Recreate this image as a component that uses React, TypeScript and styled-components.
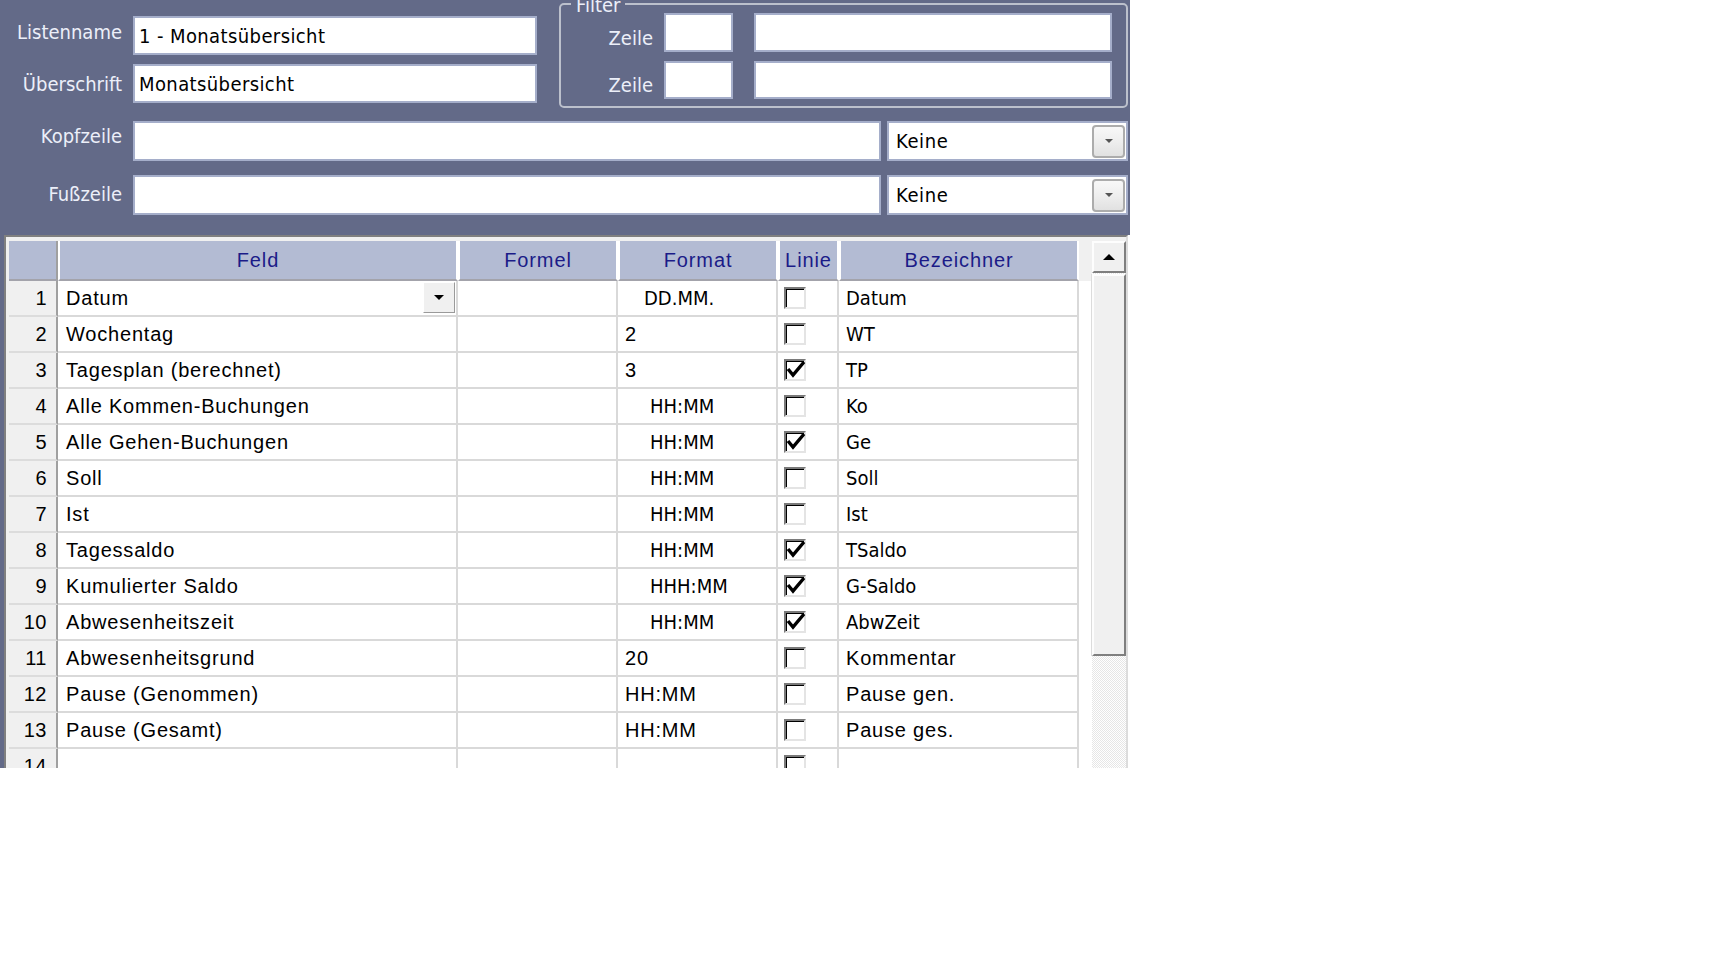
import styled, { createGlobalStyle } from "styled-components";

const msFont = `"DejaVu Sans Condensed", "DejaVu Sans", sans-serif`;
const arialFont = `"Liberation Sans", Arial, sans-serif`;
const slate = "#636a88";

const GlobalStyle = createGlobalStyle`
  html, body {
    margin: 0;
    padding: 0;
    background: #fff;
  }
  * {
    box-sizing: border-box;
  }
`;

const Panel = styled.div`
  width: 1130px;
  height: 768px;
  background: ${slate};
  display: flex;
  flex-direction: column;
  overflow: hidden;
`;

const UpperRow = styled.div`
  display: flex;
  align-items: flex-start;
`;

const NameFields = styled.div`
  display: grid;
  grid-template-columns: 133px 404px;
  grid-auto-rows: 39px;
  row-gap: 9px;
  padding-top: 16px;
`;

// labels sit a little off-centre in the original, so the top offset varies per row
const Label = styled.label<{ $bottom?: boolean; $top?: number }>`
  font-family: ${msFont};
  font-stretch: condensed;
  font-size: 20px;
  line-height: 24px;
  color: #eceff9;
  text-align: right;
  padding-right: 11px;
  white-space: nowrap;
  align-self: ${(p) => (p.$bottom ? "end" : "start")};
  padding-top: ${(p) => (p.$bottom ? 0 : p.$top ?? 4)}px;
  padding-bottom: ${(p) => (p.$bottom ? "2px" : "0")};
`;

const RowLabel = styled(Label)`
  padding-right: 5px;
`;

const TextInput = styled.input`
  width: 100%;
  height: 100%;
  margin: 0;
  border: 2px solid #a5aeca;
  background: #fff;
  padding: 0 4px;
  font-family: ${msFont};
  font-stretch: condensed;
  font-size: 20px;
  letter-spacing: 0.4px;
  color: #000;
  outline: none;
`;

const WideInput = styled(TextInput)`
  margin-left: 21px;
  width: calc(100% - 21px);
`;

const FilterBox = styled.div`
  position: relative;
  margin: 3px 0 0 22px;
  width: 569px;
  height: 105px;
  border: 2px solid #bcc0cc;
  border-radius: 5px;
  padding: 8px 14px 0 0;
  display: grid;
  grid-template-columns: 103px 69px 1fr;
  grid-template-rows: 39px 38px;
  row-gap: 9px;
`;

const Legend = styled.span`
  position: absolute;
  top: -10px;
  left: 10px;
  padding: 0 5px;
  background: ${slate};
  font-family: ${msFont};
  font-stretch: condensed;
  font-size: 20px;
  line-height: 20px;
  color: #eceff9;
`;

const LowerRows = styled.div`
  display: grid;
  grid-template-columns: 127px 748px 241px;
  column-gap: 6px;
  grid-auto-rows: 40px;
  row-gap: 14px;
  margin-top: 13px;
`;

const Combo = styled.div`
  display: flex;
  align-items: center;
  justify-content: space-between;
  border: 2px solid #a5aeca;
  background: #fff;
  padding: 0 1px 0 7px;
  font-family: ${msFont};
  font-stretch: condensed;
  font-size: 20px;
  letter-spacing: 0.6px;
  color: #000;
`;

const ComboButton = styled.span`
  width: 33px;
  height: 33px;
  border: 2px solid #acacac;
  border-radius: 4px;
  background: linear-gradient(#f8f8f8 0%, #eeeeee 50%, #e1e1e1 100%);
  display: flex;
  align-items: center;
  justify-content: center;

  &::after {
    content: "";
    border-left: 4px solid transparent;
    border-right: 4px solid transparent;
    border-top: 4px solid #555;
  }
`;

const GridFrame = styled.div`
  flex: 1;
  min-height: 0;
  margin: 20px 2px 0 4px;
  border-top: 2px solid #808080;
  border-left: 2px solid #808080;
  border-right: 2px solid #dcdcdc;
  box-shadow: 2px 0 0 #fff;
  background: #f0f0f0;
  padding: 4px 0 0 3px;
  display: flex;
  align-items: flex-start;
  overflow: hidden;
`;

const Table = styled.div`
  display: grid;
  grid-template-columns: 49px 400px 160px 160px 61px 240px 13px;
  grid-template-rows: 40px;
  grid-auto-rows: 36px;
  background: #fff;
`;

const HeadCell = styled.div`
  display: flex;
  align-items: center;
  justify-content: center;
  background: #b3bbd3;
  color: #1b1b88;
  font-family: ${arialFont};
  font-size: 20px;
  letter-spacing: 0.9px;
  border-left: 2px solid #fff;
  border-right: 2px solid #fff;
  border-bottom: 2px solid #a3a3ab;
`;

const CornerCell = styled(HeadCell)`
  border-left: 0;
  border-right-color: #a0a0a0;
`;

const HeadFiller = styled.div`
  background: #f0f0f0;
`;

const Cell = styled.div<{ $pad?: number; $ms?: boolean }>`
  display: flex;
  align-items: center;
  padding-left: ${(p) => p.$pad ?? 7}px;
  border-right: 2px solid #d9d9d9;
  border-bottom: 2px solid #d9d9d9;
  font-family: ${(p) => (p.$ms ? msFont : arialFont)};
  font-stretch: ${(p) => (p.$ms ? "condensed" : "normal")};
  letter-spacing: ${(p) => (p.$ms ? "0" : "0.8px")};
  font-size: 20px;
  color: #000;
  white-space: nowrap;
  overflow: hidden;
`;

const RowNum = styled(Cell)`
  justify-content: flex-end;
  padding: 0 9px 0 0;
  letter-spacing: 0.5px;
  background: #f0f0f0;
  border-right-color: #a0a0a0;
  border-bottom-color: #dcdcdc;
`;

const Filler = styled.div`
  background: #fff;
`;

const CellDrop = styled.span`
  margin: 0 1px 1px auto;
  width: 32px;
  height: 31px;
  flex: none;
  background: #f0f0f0;
  border: 1px solid;
  border-color: #fff #9a9a9a #9a9a9a #fff;
  display: flex;
  align-items: center;
  justify-content: center;

  &::after {
    content: "";
    border-left: 5px solid transparent;
    border-right: 5px solid transparent;
    border-top: 5px solid #000;
  }
`;

const CheckBox = styled.span`
  width: 22px;
  height: 22px;
  flex: none;
  border: 2px solid;
  border-color: #7a7a7a #e4e4e4 #e4e4e4 #7a7a7a;
  box-shadow: inset 1px 1px 0 #000;
  background: #fff;
  display: flex;
  align-items: center;
  justify-content: center;

  svg {
    overflow: visible;
  }
`;

const ScrollBar = styled.div`
  width: 34px;
  align-self: stretch;
  display: flex;
  flex-direction: column;
  background-color: #fff;
  background-image: repeating-conic-gradient(#e6e6e6 0 25%, #fff 0 50%);
  background-size: 2px 2px;
`;

const ScrollButton = styled.div`
  height: 32px;
  flex: none;
  background: #f0f0f0;
  border: 2px solid;
  border-color: #fdfdfd #7f7f7f #7f7f7f #fdfdfd;
  display: flex;
  align-items: center;
  justify-content: center;

  &::after {
    content: "";
    border-left: 6px solid transparent;
    border-right: 6px solid transparent;
    border-bottom: 6px solid #000;
  }
`;

const Thumb = styled.div`
  height: 382px;
  flex: none;
  margin-top: 1px;
  background: #f0f0f0;
  border: 2px solid;
  border-color: #fdfdfd #7f7f7f #7f7f7f #fdfdfd;
  box-shadow: -1px 0 0 #dcdcdc;
`;

type Row = {
  feld: string;
  format: string;
  fmtIndent?: number;
  fmtMs?: boolean;
  linie: boolean;
  bez: string;
  bezMs?: boolean;
};

const rows: Row[] = [
  { feld: "Datum", format: "DD.MM.", fmtIndent: 19, fmtMs: true, linie: false, bez: "Datum", bezMs: true },
  { feld: "Wochentag", format: "2", linie: false, bez: "WT", bezMs: true },
  { feld: "Tagesplan (berechnet)", format: "3", linie: true, bez: "TP", bezMs: true },
  { feld: "Alle Kommen-Buchungen", format: "HH:MM", fmtIndent: 25, fmtMs: true, linie: false, bez: "Ko", bezMs: true },
  { feld: "Alle Gehen-Buchungen", format: "HH:MM", fmtIndent: 25, fmtMs: true, linie: true, bez: "Ge", bezMs: true },
  { feld: "Soll", format: "HH:MM", fmtIndent: 25, fmtMs: true, linie: false, bez: "Soll", bezMs: true },
  { feld: "Ist", format: "HH:MM", fmtIndent: 25, fmtMs: true, linie: false, bez: "Ist", bezMs: true },
  { feld: "Tagessaldo", format: "HH:MM", fmtIndent: 25, fmtMs: true, linie: true, bez: "TSaldo", bezMs: true },
  { feld: "Kumulierter Saldo", format: "HHH:MM", fmtIndent: 25, fmtMs: true, linie: true, bez: "G-Saldo", bezMs: true },
  { feld: "Abwesenheitszeit", format: "HH:MM", fmtIndent: 25, fmtMs: true, linie: true, bez: "AbwZeit", bezMs: true },
  { feld: "Abwesenheitsgrund", format: "20", linie: false, bez: "Kommentar" },
  { feld: "Pause (Genommen)", format: "HH:MM", linie: false, bez: "Pause gen." },
  { feld: "Pause (Gesamt)", format: "HH:MM", linie: false, bez: "Pause ges." },
  { feld: "", format: "", linie: false, bez: "" },
];

const Check = ({ on }: { on: boolean }) => (
  <CheckBox>
    {on && (
      <svg width="18" height="18" viewBox="0 0 18 18">
        <polyline points="2,8 7,14 18,1" fill="none" stroke="#000" strokeWidth="3.4" />
      </svg>
    )}
  </CheckBox>
);

const App = () => {
  return (
    <>
      <GlobalStyle />
      <Panel>
        <UpperRow>
          <NameFields>
            <Label $top={4}>Listenname</Label>
            <TextInput defaultValue="1 - Monatsübersicht" />
            <Label $top={8}>Überschrift</Label>
            <TextInput defaultValue="Monatsübersicht" />
          </NameFields>
          <FilterBox>
            <Legend>Filter</Legend>
            <Label $bottom>Zeile</Label>
            <TextInput />
            <WideInput />
            <Label $bottom>Zeile</Label>
            <TextInput />
            <WideInput />
          </FilterBox>
        </UpperRow>
        <LowerRows>
          <RowLabel $top={3}>Kopfzeile</RowLabel>
          <TextInput />
          <Combo>
            Keine
            <ComboButton />
          </Combo>
          <RowLabel $top={7}>Fußzeile</RowLabel>
          <TextInput />
          <Combo>
            Keine
            <ComboButton />
          </Combo>
        </LowerRows>
        <GridFrame>
          <Table>
            <CornerCell />
            <HeadCell>Feld</HeadCell>
            <HeadCell>Formel</HeadCell>
            <HeadCell>Format</HeadCell>
            <HeadCell>Linie</HeadCell>
            <HeadCell>Bezeichner</HeadCell>
            <HeadFiller />
            {rows.map((r, i) => (
              <>
                <RowNum key={`n${i}`}>{i + 1}</RowNum>
                <Cell key={`f${i}`} $pad={8}>
                  {r.feld}
                  {i === 0 && <CellDrop />}
                </Cell>
                <Cell key={`x${i}`} />
                <Cell key={`m${i}`} $pad={7 + (r.fmtIndent ?? 0)} $ms={r.fmtMs}>
                  {r.format}
                </Cell>
                <Cell key={`l${i}`} $pad={6}>
                  <Check on={r.linie} />
                </Cell>
                <Cell key={`b${i}`} $ms={r.bezMs}>
                  {r.bez}
                </Cell>
                <Filler key={`e${i}`} />
              </>
            ))}
          </Table>
          <ScrollBar>
            <ScrollButton />
            <Thumb />
          </ScrollBar>
        </GridFrame>
      </Panel>
    </>
  );
};

export default App;
